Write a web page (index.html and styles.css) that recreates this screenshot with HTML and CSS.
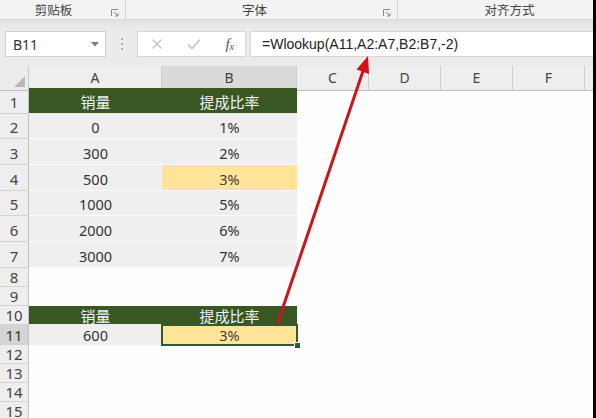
FILE: index.html
```html
<!DOCTYPE html>
<html lang="zh-CN">
<head>
<meta charset="utf-8">
<title>Excel</title>
<link rel="stylesheet" href="styles.css">
</head>
<body>
<div class="app">
  <div class="ribbon">
    <div class="group g1"><span class="glabel">剪贴板</span><svg class="launcher" width="8" height="8" viewBox="0 0 8 8"><path d="M0.5 7V0.5H7" fill="none" stroke="#8a8a8a" stroke-width="1"/><path d="M3 3L7 7M7 4V7H4" fill="none" stroke="#8a8a8a" stroke-width="1"/></svg></div>
    <div class="group g2"><span class="glabel">字体</span><svg class="launcher" width="8" height="8" viewBox="0 0 8 8"><path d="M0.5 7V0.5H7" fill="none" stroke="#8a8a8a" stroke-width="1"/><path d="M3 3L7 7M7 4V7H4" fill="none" stroke="#8a8a8a" stroke-width="1"/></svg></div>
    <div class="group g3"><span class="glabel">对齐方式</span></div>
  </div>
  <div class="fbar">
    <div class="namebox"><span>B11</span><svg class="dd" width="8" height="5" viewBox="0 0 8 5"><path d="M0 0H8L4 4.5Z" fill="#7a7a7a"/></svg></div>
    <div class="grip"><i></i><i></i><i></i></div>
    <div class="fbtns">
      <svg width="12" height="12" viewBox="0 0 12 12"><path d="M1.5 1.5L10.5 10.5M10.5 1.5L1.5 10.5" stroke="#c4c4c4" stroke-width="1.4"/></svg>
      <svg width="14" height="12" viewBox="0 0 14 12"><path d="M1 6.5L5 10.5L13 1.5" fill="none" stroke="#c4c4c4" stroke-width="1.6"/></svg>
      <span class="fx">f<sub>x</sub></span>
    </div>
    <div class="finput">=Wlookup(A11,A2:A7,B2:B7,-2)</div>
  </div>
  <div class="sheet">
    <div class="row hdr">
      <div class="corner"></div>
      <div class="ch">A</div><div class="ch sel">B</div><div class="ch">C</div><div class="ch">D</div><div class="ch">E</div><div class="ch">F</div><div class="ch last"></div>
    </div>
    <div class="row tall"><div class="rh">1</div><div class="c green cn">销量</div><div class="c green cn">提成比率</div><div class="c"></div><div class="c"></div><div class="c"></div><div class="c"></div><div class="c"></div></div>
    <div class="row tall r25"><div class="rh">2</div><div class="c gray">0</div><div class="c gray">1%</div><div class="c"></div><div class="c"></div><div class="c"></div><div class="c"></div><div class="c"></div></div>
    <div class="row tall"><div class="rh">3</div><div class="c gray">300</div><div class="c gray">2%</div><div class="c"></div><div class="c"></div><div class="c"></div><div class="c"></div><div class="c"></div></div>
    <div class="row tall"><div class="rh">4</div><div class="c gray">500</div><div class="c yellow">3%</div><div class="c"></div><div class="c"></div><div class="c"></div><div class="c"></div><div class="c"></div></div>
    <div class="row tall r25"><div class="rh">5</div><div class="c gray">1000</div><div class="c gray">5%</div><div class="c"></div><div class="c"></div><div class="c"></div><div class="c"></div><div class="c"></div></div>
    <div class="row tall"><div class="rh">6</div><div class="c gray">2000</div><div class="c gray">6%</div><div class="c"></div><div class="c"></div><div class="c"></div><div class="c"></div><div class="c"></div></div>
    <div class="row tall"><div class="rh">7</div><div class="c gray">3000</div><div class="c gray">7%</div><div class="c"></div><div class="c"></div><div class="c"></div><div class="c"></div><div class="c"></div></div>
    <div class="row short"><div class="rh">8</div><div class="c"></div><div class="c"></div><div class="c"></div><div class="c"></div><div class="c"></div><div class="c"></div><div class="c"></div></div>
    <div class="row short"><div class="rh">9</div><div class="c"></div><div class="c"></div><div class="c"></div><div class="c"></div><div class="c"></div><div class="c"></div><div class="c"></div></div>
    <div class="row short"><div class="rh">10</div><div class="c green cn">销量</div><div class="c green cn">提成比率</div><div class="c"></div><div class="c"></div><div class="c"></div><div class="c"></div><div class="c"></div></div>
    <div class="row short r20"><div class="rh rsel">11</div><div class="c gray">600</div><div class="c yellow active">3%</div><div class="c"></div><div class="c"></div><div class="c"></div><div class="c"></div><div class="c"></div></div>
    <div class="row short"><div class="rh">12</div><div class="c"></div><div class="c"></div><div class="c"></div><div class="c"></div><div class="c"></div><div class="c"></div><div class="c"></div></div>
    <div class="row short"><div class="rh">13</div><div class="c"></div><div class="c"></div><div class="c"></div><div class="c"></div><div class="c"></div><div class="c"></div><div class="c"></div></div>
    <div class="row short"><div class="rh">14</div><div class="c"></div><div class="c"></div><div class="c"></div><div class="c"></div><div class="c"></div><div class="c"></div><div class="c"></div></div>
    <div class="row short"><div class="rh">15</div><div class="c"></div><div class="c"></div><div class="c"></div><div class="c"></div><div class="c"></div><div class="c"></div><div class="c"></div></div>
  </div>
  <svg class="arrow" width="596" height="418" viewBox="0 0 596 418">
    <line x1="278" y1="322" x2="363" y2="71" stroke="#c8161e" stroke-width="3" stroke-linecap="round"/>
    <polygon points="368,56 369,74 356.5,69.5" fill="#d0121b"/>
  </svg>
</div>
</body>
</html>
```

FILE: styles.css
```css
html, body {
  margin: 0;
  padding: 0;
  background: #000;
  width: 596px;
  height: 418px;
  overflow: hidden;
}
.app {
  position: relative;
  width: 593px;
  height: 418px;
  background: #fdfdfd;
  font-family: "Noto Sans", "Noto Sans CJK SC", sans-serif;
  overflow: hidden;
}
.ribbon {
  display: flex;
  height: 19px;
  background: #f3f3f3;
}
.group {
  position: relative;
  display: flex;
  align-items: center;
  justify-content: center;
  height: 19px;
  box-sizing: border-box;
}
.g1 { width: 126px; border-right: 1px solid #d2d2d2; }
.g2 { width: 272px; border-right: 1px solid #d2d2d2; }
.g3 { flex: 1; padding-left: 28px; }
.glabel {
  font-family: "Noto Sans CJK SC", sans-serif;
  font-size: 12.5px;
  color: #444;
  line-height: 19px;
}
.g1 .glabel { margin-left: -18px; }
.g2 .glabel { margin-left: -14px; }
.launcher {
  position: absolute;
  right: 6px;
  top: 9px;
}
.fbar {
  display: flex;
  align-items: center;
  height: 47px;
  padding: 3px 0 0 5px;
  box-sizing: border-box;
  background: linear-gradient(#dadada 0px, #e6e6e6 4px, #ebebeb 12px, #ebebeb 100%);
}
.namebox {
  width: 101px;
  height: 26px;
  box-sizing: border-box;
  background: #fff;
  border: 1px solid #cfcfcf;
  display: flex;
  align-items: center;
  justify-content: space-between;
  padding: 0 6px 0 7px;
  font-size: 14px;
  color: #333;
}
.dd { margin-top: 1px; }
.grip {
  width: 31px;
  display: flex;
  flex-direction: column;
  align-items: center;
  gap: 3px;
}
.grip i {
  display: block;
  width: 2px;
  height: 2px;
  background: #b0b0b0;
}
.fbtns {
  width: 109px;
  height: 26px;
  box-sizing: border-box;
  background: #fff;
  border: 1px solid #d6d6d6;
  display: flex;
  align-items: center;
  justify-content: space-between;
  padding: 0 11px 0 13px;
}
.fx {
  font-family: "Liberation Serif", serif;
  font-style: italic;
  font-size: 15px;
  color: #555;
  line-height: 1;
}
.fx sub {
  font-size: 10px;
  vertical-align: -1px;
}
.finput {
  flex: 1;
  margin-left: 4px;
  height: 26px;
  box-sizing: border-box;
  background: #fff;
  border: 1px solid #d6d6d6;
  border-right: none;
  padding-left: 11px;
  font-family: "Liberation Sans", sans-serif;
  font-size: 14px;
  line-height: 24px;
  color: #222;
}
.row {
  display: grid;
  grid-template-columns: 29px 133px 135px 72px 72px 72px 72px 8px;
}
.hdr {
  height: 22px;
  background: #ececec;
}
.tall { height: 26px; }
.r25 { height: 25px; }
.short { height: 19px; }
.r20 { height: 20px; }
.corner {
  position: relative;
  background: #ececec;
  border-right: 1px solid #c9c9c9;
  border-bottom: 1px solid #bcbcbc;
}
.corner::after {
  content: "";
  position: absolute;
  right: 3px;
  bottom: 3px;
  width: 0;
  height: 0;
  border-left: 11px solid transparent;
  border-bottom: 11px solid #b8b8b8;
}
.ch {
  background: #eeeeee;
  border-right: 1px solid #cdcdcd;
  border-bottom: 1px solid #bcbcbc;
  text-align: center;
  font-size: 14px;
  line-height: 24px;
  color: #444;
}
.ch.sel { background: #dadada; }
.ch.last { border-right: none; }
.rh {
  background: #eeeeee;
  border-right: 1px solid #c3c3c3;
  border-bottom: 1px solid #d3d3d3;
  box-sizing: border-box;
  font-size: 15px;
  color: #444;
  display: flex;
  align-items: flex-end;
  justify-content: center;
  line-height: 17px;
  overflow: hidden;
}
.tall .rh { line-height: 21px; }
.rh.rsel { background: #d4d4d4; color: #333; }
.c {
  position: relative;
  box-sizing: border-box;
  display: flex;
  align-items: center;
  justify-content: center;
  font-size: 14.5px;
  line-height: 17px;
  color: #333;
}
.gray {
  background: #efefef;
  border-bottom: 1px solid #fbfbfb;
}
.tall .gray, .tall .yellow { padding-top: 3px; }
.yellow {
  background: #ffe49a;
  border-bottom: 1px solid #fbfbfb;
  color: #4a4030;
}
.green {
  background: #385723;
  color: #f2f2f2;
  border-bottom: 1px solid #e9ece6;
}
.cn {
  font-family: "Noto Sans CJK SC", sans-serif;
  font-size: 15px;
}
.tall .cn { padding-top: 2px; }
.short .gray, .short .yellow { border-bottom: none; }
.active {
  outline: 2px solid #2f5a35;
  outline-offset: -1px;
}
.active::after {
  content: "";
  position: absolute;
  right: -3px;
  bottom: -3px;
  width: 5px;
  height: 5px;
  background: #2f5a35;
  border: 1px solid #fff;
  border-width: 1px 0 0 1px;
}
.arrow {
  position: absolute;
  left: 0;
  top: 0;
  pointer-events: none;
}
```
